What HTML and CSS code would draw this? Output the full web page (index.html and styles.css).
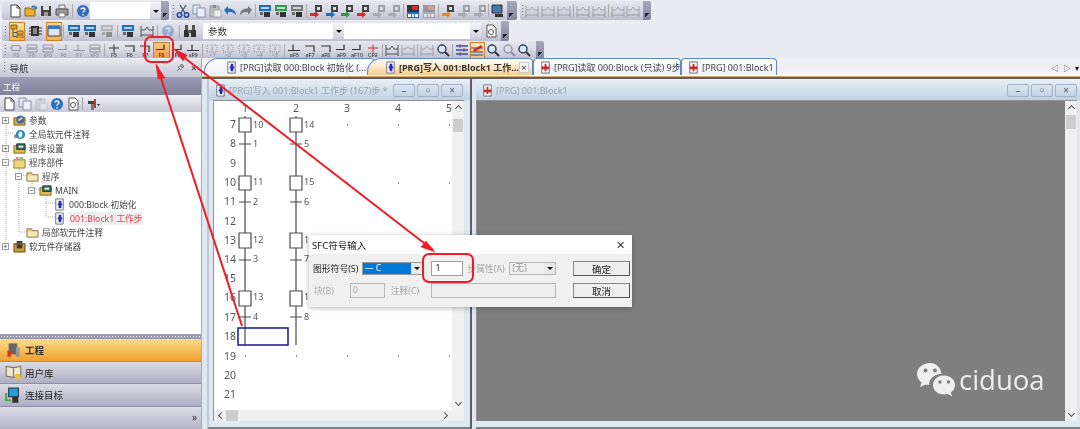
FILE: index.html
```html
<!DOCTYPE html>
<html lang="en">
<head>
  <meta charset="UTF-8" />
  <title>SFC</title>
  <link rel="stylesheet" href="styles.css">
</head>
<body>
<svg class="defs" width="0" height="0">
  <symbol id="new" viewBox="0 0 14 14"><path d="M3 1h6l3 3v9H3z" fill="#fff" stroke="#444"/><path d="M9 1v3h3" fill="none" stroke="#444"/></symbol>
  <symbol id="open" viewBox="0 0 14 14"><path d="M1 4h5l1 1h4v7H1z" fill="#e8b030" stroke="#8a6410"/><path d="M7 3c1-2 4-2 5 0l1-1v3h-3l1-1c-1-1-2-1-3 0z" fill="#2a6cc0"/></symbol>
  <symbol id="save" viewBox="0 0 14 14"><path d="M2 2h10v10H2z" fill="#444"/><path d="M4 2h6v4H4z" fill="#ddd"/><path d="M5 8h4v4H5z" fill="#999"/></symbol>
  <symbol id="print" viewBox="0 0 14 14"><path d="M4 1h6v4H4z" fill="#eee" stroke="#777"/><path d="M1 5h12v6H1z" fill="#999" stroke="#555"/><path d="M4 9h6v4H4z" fill="#fff" stroke="#777"/></symbol>
  <symbol id="help" viewBox="0 0 14 14"><circle cx="7" cy="7" r="6" fill="#2f6fc0"/><path d="M5 5.500c0-2 4-2 4 0 0 1.500-2 1.500-2 3" fill="none" stroke="#fff" stroke-width="1.300"/><path d="M6.300 10h1.400v1.400H6.300z" fill="#fff"/></symbol>
  <symbol id="cut" viewBox="0 0 14 14"><path d="M4 1l5 8M10 1L5 9" stroke="#555" stroke-width="1.300"/><circle cx="3.500" cy="11" r="2.200" fill="none" stroke="#1c4fa8" stroke-width="1.500"/><circle cx="10.500" cy="11" r="2.200" fill="none" stroke="#1c4fa8" stroke-width="1.500"/></symbol>
  <symbol id="copy" viewBox="0 0 14 14"><path d="M1 1h7v9H1z" fill="#dfe6f2" stroke="#8a93a8"/><path d="M5 4h8v9H5z" fill="#eef" stroke="#8a93a8"/></symbol>
  <symbol id="paste" viewBox="0 0 14 14"><path d="M2 2h9v11H2z" fill="#bbb" stroke="#999"/><path d="M5 1h3v3H5z" fill="#888"/><path d="M6 6h7v7H6z" fill="#eee" stroke="#aaa"/></symbol>
  <symbol id="undo" viewBox="0 0 14 14"><path d="M1 6l4-4v2.500c5 0 8 2 8 7-1.500-3-4-3.500-8-3.500V11z" fill="currentColor"/></symbol>
  <symbol id="redo" viewBox="0 0 14 14"><path d="M13 6L9 2v2.500c-5 0-8 2-8 7 1.500-3 4-3.500 8-3.500V11z" fill="currentColor"/></symbol>
  <symbol id="plc" viewBox="0 0 14 14"><path d="M1 1h12v6H1z" fill="currentColor"/><path d="M3 3h8v2H3z" fill="#fff" opacity=".7"/><path d="M6 8h6v5H6z" fill="#333"/><path d="M2 8h3v3H2z" fill="#666"/></symbol>
  <symbol id="xfer" viewBox="0 0 14 14"><path d="M6 1h7v7H6z" fill="#444"/><path d="M8 3h3v3H8z" fill="#ddd"/><path d="M1 9h5V7l4 3.500L6 14v-2H1z" fill="currentColor"/></symbol>
  <symbol id="dev" viewBox="0 0 14 14"><path d="M1 1h12v7H1z" fill="#333"/><path d="M6 2h6v4H6z" fill="#c33"/><path d="M1 8h12v6H1z" fill="currentColor"/><path d="M2 10h3v3H2zM6 10h2v3H6zM9 10h3v3H9z" fill="#fff"/></symbol>
  <symbol id="chip" viewBox="0 0 14 14"><path d="M3 2h8v10H3z" fill="#333"/><path d="M1 4h13M1 7h13M1 10h13" stroke="#333"/><path d="M5 4h4v6H5z" fill="#888"/></symbol>
  <symbol id="tree" viewBox="0 0 14 14"><path d="M1 1h6v4H1z" fill="#e09a20" stroke="#8a6410"/><path d="M7 7h6v3H7zM7 11h6v3H7z" fill="#e8b030" stroke="#8a6410"/><path d="M3 5v7.500h4M3 8.500h4" fill="none" stroke="#555"/></symbol>
  <symbol id="win" viewBox="0 0 14 14"><path d="M1 2h12v10H1z" fill="#dde7f5" stroke="#345"/><path d="M1 2h12v3H1z" fill="#3d73b8"/></symbol>
  <symbol id="mon" viewBox="0 0 14 14"><path d="M2 1h10v8H2z" fill="#4a78b0" stroke="#333"/><path d="M5 10h8v3H5z" fill="#333"/></symbol>
  <symbol id="find" viewBox="0 0 14 14"><path d="M1 6h5v7H1zM8 6h5v7H8z" fill="#333"/><path d="M2 1h3v5H2zM9 1h3v5H9zM5 6h3v3H5z" fill="#555"/></symbol>
  <symbol id="lens" viewBox="0 0 14 14"><circle cx="6" cy="6" r="4" fill="#d8e6f8" stroke="#345" stroke-width="1.500"/><path d="M9 9l4 4" stroke="#333" stroke-width="2"/></symbol>
  <symbol id="doc" viewBox="0 0 14 14"><path d="M3 1h6l3 3v9H3z" fill="#fff" stroke="#555"/><circle cx="7" cy="8" r="2.500" fill="none" stroke="#555"/></symbol>
  <symbol id="lines" viewBox="0 0 14 14"><path d="M1 3h12M1 7h12M1 11h12" stroke="#2a55b0" stroke-width="1.500"/><path d="M5 1v4M9 5v4M5 9v4" stroke="#c33"/></symbol>
  <symbol id="pen" viewBox="0 0 14 14"><path d="M1 5h12M1 9h12M1 12h12" stroke="#23489a"/><path d="M3 7l8-5 1.500 2-8 5z" fill="#d22"/></symbol>
  <symbol id="ladder" viewBox="0 0 14 14"><path d="M1 2v11M13 2v11M1 6h4l2-3 2 3h4M1 11h12" fill="none" stroke="#555"/></symbol>
  <symbol id="step" viewBox="0 0 14 8"><path d="M3 1h8v5H3z" fill="none" stroke="currentColor"/><path d="M1 3.500h2M11 3.500h2" stroke="currentColor"/></symbol>
  <symbol id="rows" viewBox="0 0 14 8"><path d="M2 .500h10v3H2zM2 4.500h10v3H2z" fill="none" stroke="currentColor"/></symbol>
  <symbol id="bar" viewBox="0 0 14 8"><path d="M7 0v8M2 3.500h10" stroke="currentColor" fill="none"/></symbol>
  <symbol id="hook" viewBox="0 0 14 8"><path d="M2 1.500h9v6" stroke="currentColor" fill="none" stroke-width="1.200"/></symbol>
  <symbol id="ell" viewBox="0 0 14 8"><path d="M10 0v5H2" stroke="currentColor" fill="none" stroke-width="1.200"/></symbol>
  <symbol id="lpost" viewBox="0 0 14 8"><path d="M6 0v6H1M6 6h7" stroke="currentColor" fill="none" stroke-width="1.200"/></symbol>
  <symbol id="dash" viewBox="0 0 14 8"><path d="M2 .500h10v7H2z" fill="none" stroke="currentColor" stroke-dasharray="1 1"/><path d="M7 2v4" stroke="currentColor"/></symbol>
  <symbol id="prog" viewBox="0 0 14 14"><path d="M3 1h8v12H3z" fill="#fff" stroke="#667"/><path d="M6 3h3v8H6z" fill="#2330b0"/><path d="M5 6h5v2H5z" fill="#2330b0"/></symbol>
  <symbol id="progr" viewBox="0 0 14 14"><path d="M3 1h8v12H3z" fill="#fff" stroke="#667"/><path d="M3 6h8v3H3z" fill="#c52a2a"/><path d="M7 3v8" stroke="#c52a2a" stroke-width="2"/></symbol>
  <symbol id="folder" viewBox="0 0 14 14"><path d="M1 3h5l1 2h6v7H1z" fill="#eacb7c" stroke="#8a7a50"/><path d="M2 6h10v5H2z" fill="#f4e6bf"/></symbol>
  <symbol id="fold2" viewBox="0 0 14 14"><path d="M1 4h12v8H1z" fill="#e3b94f" stroke="#7a6a30"/><path d="M4 2h9v6H4z" fill="#3b6e50" stroke="#234"/><path d="M6 4h5v2H6z" fill="#dfe"/></symbol>
  <symbol id="param" viewBox="0 0 14 14"><path d="M1 4h12v8H1z" fill="#d9a52e" stroke="#7a6a30"/><circle cx="8" cy="6" r="4.500" fill="#3a6bb0"/><path d="M6 7l4-3" stroke="#f5d060" stroke-width="2"/></symbol>
  <symbol id="globe" viewBox="0 0 14 14"><path d="M1 7h5v4H1z" fill="#999"/><circle cx="8" cy="7" r="5" fill="#2f86c0"/><path d="M8 3v8" stroke="#9fd090" stroke-width="3"/><path d="M6 5h4v4H6z" fill="#fff"/></symbol>
  <symbol id="parts" viewBox="0 0 14 14"><path d="M1 4h12v9H1z" fill="#f0d675" stroke="#8a7a40"/><path d="M3 1h3v4H3z" fill="#e78aa0"/><path d="M7 1h4v4H7z" fill="#8cc46a"/></symbol>
  <symbol id="mem" viewBox="0 0 14 14"><path d="M1 4h12v9H1z" fill="#c99a32" stroke="#5a4a20"/><path d="M4 1h6v8H4z" fill="#3a3a3a"/><path d="M5 3h2v2H5z" fill="#d33"/><path d="M8 3h1v2H8z" fill="#3c3"/></symbol>
  <symbol id="tools" viewBox="0 0 14 14"><path d="M2 4h7v3H2z" fill="#444"/><path d="M5 7h3v6H5z" fill="#777"/><path d="M8 2h2v9H8z" fill="#c33"/><path d="M11 7h3l-1.500 2z" fill="#222"/></symbol>
  <symbol id="book" viewBox="0 0 14 14"><path d="M1 2l6 1 6-1v8l-6 1-6-1z" fill="#efe6d2" stroke="#8a7a60"/><path d="M7 3v8" stroke="#8a7a60"/><circle cx="10.500" cy="10.500" r="2.500" fill="#e3c23a"/></symbol>
  <symbol id="link" viewBox="0 0 14 14"><path d="M1 5v6h4" fill="none" stroke="#3aa84a" stroke-width="1.500"/><path d="M3 1h8v7H3z" fill="#1fa0e0" stroke="#345"/><path d="M6 8h5v5H6z" fill="#333"/></symbol>
  <symbol id="plant" viewBox="0 0 14 14"><path d="M3 2h7v9H3z" fill="#666"/><path d="M9 5h3v8H9z" fill="#999"/><path d="M2 8h3v5H2z" fill="#d8381e"/></symbol>
</svg>

<div class="app">
  <div class="toolbars">
    <div class="tb-row r1">
      <div class="tb">
        <i class="b"><svg><use href="#new"/></svg></i><i class="b"><svg><use href="#open"/></svg></i><i class="b"><svg><use href="#save"/></svg></i><i class="b"><svg><use href="#print"/></svg></i>
        <s class="sep wide"></s>
        <i class="b"><svg><use href="#help"/></svg></i>
        <div class="combo c-top"><span></span><u class="drop"></u></div>
        <em class="chev"></em>
      </div>
      <div class="tb g2">
        <span class="grip"></span>
        <i class="b"><svg><use href="#cut"/></svg></i><i class="b"><svg><use href="#copy"/></svg></i><i class="b"><svg><use href="#paste"/></svg></i><i class="b blue"><svg><use href="#undo"/></svg></i><i class="b grey"><svg><use href="#redo"/></svg></i>
        <s class="sep"></s>
        <i class="b blue"><svg><use href="#plc"/></svg></i><i class="b green"><svg><use href="#plc"/></svg></i><i class="b grey"><svg><use href="#plc"/></svg></i>
        <s class="sep"></s>
        <i class="b red"><svg><use href="#xfer"/></svg></i><i class="b blue"><svg><use href="#xfer"/></svg></i><i class="b green"><svg><use href="#xfer"/></svg></i><i class="b red"><svg><use href="#xfer"/></svg></i><i class="b off grey"><svg><use href="#xfer"/></svg></i><i class="b off grey"><svg><use href="#xfer"/></svg></i>
        <s class="sep"></s>
        <i class="b blue"><svg><use href="#dev"/></svg></i><i class="b off grey"><svg><use href="#dev"/></svg></i>
        <s class="sep"></s>
        <i class="b orange"><svg><use href="#xfer"/></svg></i><i class="b off grey"><svg><use href="#xfer"/></svg></i><i class="b off grey"><svg><use href="#xfer"/></svg></i>
        <s class="sep thin"></s>
        <i class="b"><svg><use href="#mon"/></svg></i>
        <em class="chev long"></em>
      </div>
      <div class="tb g3">
        <span class="grip"></span>
        <i class="b off"><svg><use href="#ladder"/></svg></i><i class="b off"><svg><use href="#ladder"/></svg></i><i class="b off"><svg><use href="#ladder"/></svg></i>
        <s class="sep"></s>
        <i class="b off"><svg><use href="#ladder"/></svg></i><i class="b off"><svg><use href="#ladder"/></svg></i>
        <s class="sep"></s>
        <i class="b off"><svg><use href="#ladder"/></svg></i><i class="b off"><svg><use href="#ladder"/></svg></i>
        <em class="chev"></em>
      </div>
    </div>

    <div class="tb-row r2">
      <div class="tb">
        <span class="grip"></span>
        <i class="b on"><svg><use href="#tree"/></svg></i><i class="b gap"><svg><use href="#chip"/></svg></i><i class="b on gap"><svg><use href="#win"/></svg></i>
        <s class="sep"></s>
        <i class="b blue"><svg><use href="#plc"/></svg></i><i class="b blue"><svg><use href="#plc"/></svg></i><i class="b off grey"><svg><use href="#plc"/></svg></i>
        <s class="sep wide"></s>
        <i class="b blue"><svg><use href="#plc"/></svg></i><i class="b gap"><svg><use href="#ladder"/></svg></i>
        <s class="sep wide"></s>
        <i class="b off"><svg><use href="#help"/></svg></i>
        <s class="sep wide"></s>
        <i class="b"><svg><use href="#find"/></svg></i>
        <div class="combo c-find"><span>参数</span><u class="drop"></u></div>
        <div class="combo c-next"><span></span><u class="drop"></u></div>
        <i class="b gap"><svg><use href="#doc"/></svg></i>
        <em class="chev"></em>
      </div>
    </div>

    <div class="tb-row r3">
      <div class="tb">
        <span class="grip"></span>
        <i class="k off"><svg><use href="#step"/></svg><b>F5</b></i><i class="k off"><svg><use href="#rows"/></svg><b>F6</b></i><i class="k off"><svg><use href="#rows"/></svg><b>sF6</b></i><i class="k off"><svg><use href="#ell"/></svg><b>F6</b></i><i class="k off"><svg><use href="#lpost"/></svg><b>F7</b></i><i class="k off"><svg><use href="#rows"/></svg><b>sF5</b></i>
        <s class="sep"></s>
        <i class="k"><svg><use href="#bar"/></svg><b>F5</b></i><i class="k"><svg><use href="#hook"/></svg><b>F6</b></i><i class="k"><svg><use href="#hook"/></svg><b>F7</b></i><i class="k on"><svg><use href="#ell"/></svg><b>F8</b></i><i class="k"><svg><use href="#ell"/></svg><b>F9</b></i><i class="k"><svg><use href="#lpost"/></svg><b>sF9</b></i>
        <s class="sep"></s>
        <i class="k off"><svg><use href="#dash"/></svg><b>&lt;1</b></i><i class="k off"><svg><use href="#dash"/></svg><b>&lt;2</b></i><i class="k off"><svg><use href="#dash"/></svg><b>&lt;3</b></i><i class="k off"><svg><use href="#dash"/></svg><b>&lt;4</b></i><i class="k off"><svg><use href="#dash"/></svg><b>&lt;5</b></i>
        <s class="sep"></s>
        <i class="k"><svg><use href="#lpost"/></svg><b>aF5</b></i><i class="k"><svg><use href="#hook"/></svg><b>aF7</b></i><i class="k"><svg><use href="#hook"/></svg><b>aF8</b></i><i class="k"><svg><use href="#ell"/></svg><b>aF9</b></i><i class="k"><svg><use href="#ell"/></svg><b>aF10</b></i><i class="k red-x"><svg><use href="#bar"/></svg><b>CF9</b></i>
        <s class="sep"></s>
        <i class="b"><svg><use href="#ladder"/></svg></i><i class="b off"><svg><use href="#ladder"/></svg></i>
        <s class="sep"></s>
        <i class="b off"><svg><use href="#ladder"/></svg></i><i class="b"><svg><use href="#lens"/></svg></i>
        <s class="sep"></s>
        <i class="b"><svg><use href="#lines"/></svg></i><i class="b on dim"><svg><use href="#pen"/></svg></i><i class="b"><svg><use href="#lens"/></svg></i><i class="b off"><svg><use href="#lens"/></svg></i><i class="b"><svg><use href="#lens"/></svg></i>
        <em class="chev"></em>
      </div>
    </div>
  </div>

  <div class="main">
    <aside class="nav">
      <div class="nav-head">
        <span class="grip"></span><span class="nav-title">导航</span>
        <span class="pin">&#128204;&#xFE0E;</span><span class="close">×</span>
      </div>
      <div class="nav-sub">工程</div>
      <div class="nav-tools">
        <i class="b"><svg><use href="#new"/></svg></i><i class="b"><svg><use href="#copy"/></svg></i><i class="b off"><svg><use href="#paste"/></svg></i><i class="b"><svg><use href="#help"/></svg></i><i class="b"><svg><use href="#doc"/></svg></i>
        <s class="sep"></s>
        <i class="b"><svg><use href="#tools"/></svg></i>
      </div>
      <div class="tree">
        <svg class="tree-lines" width="200" height="150" viewBox="0 113 200 150">
          <path d="M6 124V247M6 134H14M6 162H14M19 168V233H28M19 176H28M32 182V190H41M46 196V218H55M46 204H55" fill="none" stroke="#aaa" stroke-dasharray="1 1"/>
        </svg>
        <div class="node l0"><u class="pm">+</u><svg><use href="#param"/></svg>参数</div>
        <div class="node l0"><u class="pm none"></u><svg><use href="#globe"/></svg>全局软元件注释</div>
        <div class="node l0"><u class="pm">+</u><svg><use href="#fold2"/></svg>程序设置</div>
        <div class="node l0"><u class="pm">−</u><svg><use href="#parts"/></svg>程序部件</div>
        <div class="node l1"><u class="pm">−</u><svg><use href="#folder"/></svg>程序</div>
        <div class="node l2"><u class="pm">−</u><svg><use href="#fold2"/></svg>MAIN</div>
        <div class="node l3"><svg><use href="#prog"/></svg>000:Block 初始化</div>
        <div class="node l3"><svg><use href="#prog"/></svg><span class="current">001:Block1 工作步</span></div>
        <div class="node l1 nopm"><svg><use href="#folder"/></svg>局部软元件注释</div>
        <div class="node l0"><u class="pm">+</u><svg><use href="#mem"/></svg>软元件存储器</div>
      </div>
      <div class="splitter"></div>
      <div class="nav-btn active"><svg><use href="#plant"/></svg>工程</div>
      <div class="nav-btn"><svg><use href="#book"/></svg>用户库</div>
      <div class="nav-btn"><svg><use href="#link"/></svg>连接目标</div>
      <div class="nav-foot">»</div>
    </aside>

    <section class="work">
      <div class="tabs">
        <div class="tab t1"><svg><use href="#prog"/></svg>[PRG]读取 000:Block 初始化 (...</div>
        <div class="tab t2 active"><svg><use href="#prog"/></svg>[PRG]写入 001:Block1 工作...<span class="tab-x">×</span></div>
        <div class="tab t3"><svg><use href="#progr"/></svg>[PRG]读取 000:Block (只读) 9步</div>
        <div class="tab t4"><svg><use href="#progr"/></svg>[PRG] 001:Block1</div>
        <div class="tab-nav"><span>◁</span><span>▷</span><span class="tab-menu">▾</span></div>
      </div>
      <div class="mdi">
        <div class="win w-left">
          <div class="win-title"><svg><use href="#prog"/></svg><span>[PRG]写入 001:Block1 工作步 (167)步 *</span>
            <div class="win-btns"><u>–</u><u>▫</u><u>×</u></div>
          </div>
          <div class="client">
            <div class="client-top">
              <svg class="sfc" width="238" height="309" viewBox="214 101 238 309">
                <g class="wires">
                  <path d="M245 116V345M296 116V345"/>
                  <path d="M239 144h12M239 202h12M239 260h12M239 317h12M290 144h12M290 202h12M290 260h12M290 317h12"/>
                  <path class="box" d="M239 118h12v14h-12zM239 176h12v14h-12zM239 233h12v15h-12zM239 291h12v15h-12zM290 118h12v14h-12zM290 176h12v14h-12zM290 233h12v15h-12zM290 291h12v15h-12z"/>
                </g>
                <rect class="cursor" x="238" y="328" width="50" height="17"/>
                <g class="heads">
                  <text x="245" y="112">1</text><text x="296" y="112">2</text><text x="347" y="112">3</text><text x="398" y="112">4</text><text x="449" y="112">5</text>
                </g>
                <g class="nums">
                  <text x="236" y="128">7</text><text x="236" y="147">8</text><text x="236" y="167">9</text><text x="236" y="186">10</text><text x="236" y="205">11</text><text x="236" y="225">12</text><text x="236" y="244">13</text><text x="236" y="263">14</text><text x="236" y="282">15</text><text x="236" y="301">16</text><text x="236" y="321">17</text><text x="236" y="340">18</text><text x="236" y="360">19</text><text x="236" y="379">20</text><text x="236" y="398">21</text>
                </g>
                <g class="tags">
                  <text x="253" y="128">10</text><text x="253" y="147">1</text><text x="253" y="185">11</text><text x="253" y="205">2</text><text x="253" y="243">12</text><text x="253" y="262">3</text><text x="253" y="300">13</text><text x="253" y="320">4</text>
                  <text x="304" y="128">14</text><text x="304" y="147">5</text><text x="304" y="185">15</text><text x="304" y="205">6</text><text x="304" y="243">16</text><text x="304" y="262">7</text><text x="304" y="300">17</text><text x="304" y="320">8</text>
                </g>
                <path class="dots" d="M347 125h1M398 125h1M449 125h1M347 183h1M398 183h1M449 183h1M245 356h1M296 356h1M347 356h1M398 356h1M449 356h1"/>
              </svg>
              <div class="vscroll"><u class="up"></u><u class="thumb"></u><u class="down"></u></div>
            </div>
            <div class="hscroll"><u class="left"></u><u class="hthumb"></u><u class="right"></u></div>
          </div>
        </div>
        <div class="divider"></div>
        <div class="win w-right">
          <div class="win-title"><svg><use href="#progr"/></svg><span>[PRG] 001:Block1</span>
            <div class="win-btns"><u>–</u><u>▫</u><u>×</u></div>
          </div>
          <div class="client">
            <div class="client-top">
              <div class="grey-area"></div>
              <div class="vscroll"><u class="up"></u><u class="thumb right-thumb"></u><u class="down"></u></div>
            </div>
          </div>
        </div>
      </div>
    </section>
  </div>

  <div class="dialog">
    <div class="dlg-title"><span>SFC符号输入</span><span class="dlg-x">✕</span></div>
    <div class="dlg-body">
      <div class="dlg-col">
        <div class="dlg-row">
          <label class="l-sym">图形符号(S)</label>
          <div class="sel"><span>— C</span><u class="drop"></u></div>
          <input class="in-step" value="1">
          <label class="dis l-attr">步属性(A)</label>
          <div class="sel dis-sel"><span>[无]</span><u class="drop"></u></div>
        </div>
        <div class="dlg-row">
          <label class="dis l-blk">块(B)</label>
          <div class="field f-blk">0</div>
          <label class="dis l-note">注释(C)</label>
          <div class="field f-note"></div>
        </div>
      </div>
      <div class="dlg-btns"><button>确定</button><button>取消</button></div>
    </div>
  </div>

  <svg class="notes" width="1080" height="429">
    <rect x="145" y="37" width="28" height="25" rx="6"/>
    <rect x="423" y="254" width="50" height="28" rx="6"/>
    <path d="M157 66L242 326"/>
    <path d="M177 52L433 250"/>
    <path class="head" d="M156 64l9 14-7 1zM174 49l13 6-4 6zM435 252l-14-5 5-6z"/>
  </svg>

  <div class="mark">
    <svg width="40" height="36" viewBox="0 0 40 36">
      <path fill="#efefef" d="M14 1C6.500 1 1 6 1 12c0 3.500 2 6.500 4.500 8.500L4 25l5.500-2.500c1.200.4 2.300.6 3.500.6 0-6.500 5.500-11 12.500-11C25 5.500 20 1 14 1z"/>
      <path fill="#efefef" d="M39 23c0-5.500-5-9.500-11-9.500S17 17.500 17 23s5 9.500 11 9.500c1.300 0 2.500-.2 3.600-.5l4.400 2.500-1.200-4C37.500 28.500 39 26 39 23z"/>
      <g fill="#7f7f7f"><circle cx="9.500" cy="8.500" r="2"/><circle cx="19" cy="8.500" r="2"/><circle cx="24" cy="20" r="1.700"/><circle cx="32.500" cy="20" r="1.700"/></g>
    </svg>
    <span>ciduoa</span>
  </div>
</div>
</body>
</html>
```

FILE: styles.css
```css
* {
  box-sizing: border-box;
}

body {
  margin: 0;
  font-family: "Noto Sans", "Noto Sans CJK SC", sans-serif;
  font-size: 9px;
  color: #333;
}

i, u, em, s {
  font-style: normal;
  text-decoration: none;
}

.defs {
  position: absolute;
}

.app {
  position: relative;
  width: 1080px;
  height: 429px;
  overflow: hidden;
  background: #ecedf3;
  filter: blur(0.45px);
}

/* toolbars */
.toolbars {
  height: 60px;
  padding-top: 1px;
  background: #ebebf2;
}

.tb-row {
  display: flex;
  gap: 3px;
  padding-left: 2px;
}

.r1 { height: 19px; margin-bottom: 1px; }
.r2 { height: 20px; }
.r3 { height: 18px; }

.tb {
  display: flex;
  align-items: center;
  height: 100%;
  padding-left: 5px;
  border-radius: 2px;
  background: linear-gradient(#e6e6ee, #d8d8e4 50%, #bebdd0);
}

.g2 { padding-left: 0; margin-left: 0; }
.g3 { padding-left: 0; }

.grip {
  width: 3.500px;
  height: 13px;
  margin-left: 1px;
  background: radial-gradient(circle, #777 0.7px, transparent 1px) 0 0 / 3px 3px;
}

.r2 .tb, .r3 .tb { padding-left: 1px; }
.r2 .grip, .r3 .grip { margin: 0 1px 0 1px; }

.b, .k {
  display: flex;
  flex: none;
  flex-direction: column;
  align-items: center;
  justify-content: center;
  width: 15.700px;
  height: 17px;
  color: #333;
}

.b svg {
  width: 14px;
  height: 14px;
}

.gap { margin-left: 2px; }
.r2 .b { width: 16.500px; }

.blue { color: #1f6fc0; }
.green { color: #2f9a4a; }
.grey { color: #777; }
.red { color: #d0302a; }
.orange { color: #e58a1c; }
.off { opacity: 0.4; }

.on {
  border: 1px solid #c8802a;
  background: linear-gradient(#fde3a8, #f8b048);
}

.r2 .on { height: 19px; }
.on.dim { background: linear-gradient(#fde9c0, #f2c070); }

.k svg {
  width: 14px;
  height: 9px;
  margin-top: 1px;
}

.k b {
  margin-top: -1px;
  font-size: 5.500px;
  line-height: 6px;
  font-weight: 400;
  color: #222;
}

.k.on {
  width: 16.500px;
  background: linear-gradient(#fbc98a, #f49a42);
  color: #4a2a10;
}

.red-x svg { color: #d0302a; }

.sep {
  width: 3.500px;
  height: 13px;
  flex: none;
  background: linear-gradient(#aaa, #aaa) center / 1px 100% no-repeat;
}

.sep.wide { width: 5px; }
.sep.thin { width: 2px; }

.chev {
  position: relative;
  flex: none;
  align-self: stretch;
  width: 8px;
  margin-left: auto;
  border-radius: 0 2px 2px 0;
  background: linear-gradient(#a8a8bc, #85859e);
}

.chev.long { width: 10px; }

.chev::after {
  content: "";
  position: absolute;
  left: 2px;
  bottom: 3px;
  width: 4px;
  height: 3px;
  border-top: 1px solid #222;
  background: linear-gradient(135deg, #222 50%, transparent 50%);
}

.combo {
  display: flex;
  flex: none;
  align-items: center;
  height: 16px;
  padding-left: 5px;
  background: #fff;
  font-size: 9.500px;
}

.combo span { flex: 1; }

.c-top { width: 71px; height: 17px; }
.c-find { width: 141px; margin-left: 5px; }
.c-next { width: 137px; }

.drop {
  flex: none;
  position: relative;
  width: 11px;
  height: 100%;
  background: linear-gradient(#f4f4f8, #cfcfda);
}

.drop::after {
  content: "";
  position: absolute;
  left: 3px;
  top: 45%;
  border: 3px solid transparent;
  border-top-color: #111;
  border-bottom-width: 0;
}

.r1 .g2 { width: 346px; }
.r1 .g3 { width: 131px; }
.r1 .tb:first-child { width: 166px; }
.r2 .tb { width: 507px; }
.r3 .tb { width: 542px; }

/* main area */
.main {
  display: flex;
  height: 369px;
}

.nav {
  display: flex;
  flex: none;
  flex-direction: column;
  width: 202px;
  margin-top: -2px;
  background: #fff;
  border-right: 1px solid #a9a9bb;
}

.nav-head {
  display: flex;
  align-items: center;
  height: 19px;
  padding-left: 2px;
  background: linear-gradient(#eaeaf1, #c6c6d6);
  font-size: 9.500px;
}

.nav-title { margin-left: 3px; }
.pin { margin-left: auto; font-size: 7px; margin-right: 6px; }
.close { margin-right: 4px; font-size: 11px; }

.nav-sub {
  height: 18px;
  padding: 3px 3px;
  background: linear-gradient(#9c9cb4, #80809c);
  color: #fff;
  font-size: 8.500px;
}

.nav-tools {
  display: flex;
  align-items: center;
  height: 17px;
  padding-left: 1px;
  background: linear-gradient(#f0f0f5, #c9c9d8);
}

.nav-tools .b { width: 16px; }

.tree {
  position: relative;
  height: 222px;
  padding-top: 1px;
  background: #fff;
}

.tree-lines {
  position: absolute;
  left: 0;
  top: 0;
}

.node {
  position: relative;
  display: flex;
  align-items: center;
  height: 14.100px;
  white-space: nowrap;
  font-size: 8.700px;
  color: #444;
}

.node svg {
  flex: none;
  width: 13px;
  height: 13px;
  margin-right: 3px;
}

.l0 { padding-left: 2px; }
.l1 { padding-left: 15px; }
.l2 { padding-left: 28px; }
.l3 { padding-left: 53px; }
.l1.nopm { padding-left: 26px; }

.pm {
  width: 7px;
  height: 7px;
  margin-right: 4px;
  border: 1px solid #999;
  background: #fff;
  font-size: 7px;
  line-height: 5px;
  text-align: center;
  color: #333;
}

.pm.none { border: 0; background: none; }

.current {
  padding: 0 1px;
  background: #eee;
  color: #e8404a;
}

.splitter {
  height: 5px;
  background: radial-gradient(circle, #eee 0.5px, transparent 0.8px) center / 3px 3px repeat-x #9b9bb2;
}

.nav-btn {
  display: flex;
  align-items: center;
  height: 22.700px;
  padding-left: 5px;
  border-bottom: 1px solid #8e8ea6;
  background: linear-gradient(#dcdce6, #aeaec4);
  font-size: 9.500px;
  color: #222;
}

.nav-btn svg {
  width: 17px;
  height: 17px;
  margin-right: 3px;
}

.nav-btn.active { background: linear-gradient(#fbdc8c, #f0a22e); }

.nav-foot {
  flex: 1;
  padding: 6px 4px 0 0;
  background: linear-gradient(#dcdce6, #b4b4c8);
  text-align: right;
  font-size: 10px;
  line-height: 9px;
}

.work {
  flex: 1;
  display: flex;
  flex-direction: column;
  min-width: 0;
  margin-top: -2px;
}

.tabs {
  position: relative;
  display: flex;
  align-items: flex-end;
  flex: none;
  height: 21px;
  padding: 0 0 2px 2px;
  border-bottom: 2px solid #5e5e68;
  background: linear-gradient(#eeeef3 60%, #fff);
  box-shadow: inset 0 -1px 0 #d8a868;
}

.tab {
  display: flex;
  align-items: center;
  flex: none;
  height: 17px;
  overflow: hidden;
  border: 1px solid #5b8bc8;
  border-bottom: 0;
  border-radius: 4px 4px 0 0;
  background: linear-gradient(#fff, #eef1f6);
  font-size: 9px;
  white-space: nowrap;
  color: #444;
}

.tab svg {
  flex: none;
  width: 13px;
  height: 13px;
  margin-right: 2px;
}

.t1 { width: 171px; padding-left: 20px; border-top-left-radius: 14px; }
.t2 { width: 166px; padding-left: 16px; margin-left: -8px; position: relative; border-top-left-radius: 14px; }
.t3 { width: 148px; padding-left: 5px; }
.t4 { width: 96px; padding-left: 5px; }

.active {
  background: linear-gradient(#fff, #fdf0d8 35%, #f9cb8a);
  font-weight: 700;
  color: #333;
}

.tab-x {
  flex: none;
  width: 10px;
  height: 11px;
  margin-left: auto;
  margin-right: 4px;
  background: #f4f4f4;
  border: 1px solid #ccc;
  font-size: 9px;
  line-height: 9px;
  text-align: center;
  font-weight: 400;
}

.tab-nav {
  display: flex;
  gap: 4px;
  margin-left: auto;
  padding: 0 1px 2px 0;
  font-size: 8px;
  color: #555;
}

.tab-menu {
  color: #111;
}

.mdi {
  display: flex;
  flex: 1;
  min-height: 0;
  padding-left: 5px;
  background: #dfe7f0;
}

.win {
  display: flex;
  flex-direction: column;
  background: linear-gradient(#e9f0f6, #bfd2e3 21px, #dde8f1 22px);
}

.w-left {
  flex: none;
  width: 263px;
  padding: 0 6px 6px 4px;
  border-left: 2px solid #c2c8d2;
  border-bottom: 2px solid #7f7f85;
}

.w-right {
  flex: 1;
  margin-left: 4px;
  padding: 0 3px 6px 0;
  border-bottom: 2px solid #7f7f85;
}

.divider {
  flex: none;
  width: 2px;
  background: #5e5e68;
}

.win-title {
  display: flex;
  align-items: center;
  flex: none;
  height: 21px;
  padding: 2px 0 0 5px;
  font-size: 9px;
  color: #9ba3ab;
}

.w-left .win-title { padding-left: 1px; }

.win-title svg {
  flex: none;
  width: 13px;
  height: 13px;
  margin-right: 2px;
}

.win-btns {
  display: flex;
  gap: 2px;
  margin-left: auto;
}

.w-left .win-btns { margin-right: 1px; }

.win-btns u {
  width: 22px;
  height: 13px;
  border: 1px solid #9fb2c6;
  border-radius: 2px;
  background: linear-gradient(#dce6f0, #c2d2e2);
  text-align: center;
  font-size: 10px;
  line-height: 10px;
  color: #556;
}

.client {
  display: flex;
  flex: 1;
  flex-direction: column;
  min-height: 0;
  border: 1px solid #8f9299;
  border-width: 1px 0 0 1px;
  background: #fff;
}

.client-top {
  display: flex;
  flex: 1;
  min-height: 0;
}

.sfc {
  flex: none;
  background: #fff;
}

.grey-area {
  flex: 1;
  background: #7f7f7f;
}

.wires path {
  fill: none;
  stroke: #4c4c4c;
  stroke-width: 1.200;
}

.wires .box { fill: #fff; }

.cursor {
  fill: none;
  stroke: #23239c;
  stroke-width: 1.600;
}

.sfc text {
  font-size: 10.500px;
  fill: #555;
}

.heads text { text-anchor: middle; }
.nums text { text-anchor: end; }
.tags text { font-size: 9px; }

.dots {
  fill: none;
  stroke: #222;
  stroke-width: 1;
}

.vscroll {
  position: relative;
  flex: none;
  width: 12px;
  background: #f0f0f0;
}

.hscroll {
  position: relative;
  flex: none;
  height: 11px;
  background: #f0f0f0;
}

.up, .down, .left, .right {
  position: absolute;
  width: 5px;
  height: 5px;
  border: solid #555;
  border-width: 1px 0 0 1px;
}

.up { top: 5px; left: 3.500px; transform: rotate(45deg); }
.down { bottom: 5px; left: 3.500px; transform: rotate(225deg); }
.left { left: 5px; top: 3px; transform: rotate(-45deg); }
.right { right: 17px; top: 3px; transform: rotate(135deg); }

.thumb {
  position: absolute;
  top: 18px;
  left: 1px;
  right: 1px;
  height: 13px;
  background: #cdcdcd;
}

.right-thumb { top: 14px; height: 14px; }

.hthumb {
  position: absolute;
  left: 12px;
  top: 0;
  width: 12px;
  height: 11px;
  background: #cdcdcd;
}

/* dialog */
.dialog {
  position: absolute;
  left: 309px;
  top: 235px;
  width: 323px;
  height: 72px;
  background: #f0f0f0;
  box-shadow: 0 1px 5px rgba(0, 0, 0, 0.3);
}

.dlg-title {
  display: flex;
  justify-content: space-between;
  align-items: center;
  height: 19px;
  padding: 0 7px 0 3px;
  background: #fff;
  font-size: 9.500px;
  color: #222;
}

.dlg-x {
  font-size: 11px;
  color: #333;
}

.dlg-body {
  display: flex;
  padding: 7px 3px 0 4px;
}

.dlg-col {
  display: flex;
  flex-direction: column;
  gap: 8px;
  width: 243px;
}

.dlg-row {
  display: flex;
  align-items: center;
  height: 14px;
  font-size: 8.800px;
  color: #222;
}

.dis { color: #a8a8a8; }

.l-sym { width: 49px; white-space: nowrap; }

.sel {
  display: flex;
  width: 62px;
  height: 13px;
  border: 1px solid #9a9a9a;
}

.sel span {
  flex: 1;
  padding-left: 2px;
  background: #0078d7;
  color: #fff;
  line-height: 11px;
}

.sel .drop { background: #e8e8e8; }

.in-step {
  width: 32px;
  height: 15px;
  margin-left: 8px;
  padding: 0 0 0 3px;
  border: 1px solid #a0a0a0;
  background: #fff;
  font: inherit;
  color: #222;
}

.l-attr { width: 42px; margin-left: 4px; white-space: nowrap; }

.dis-sel {
  width: 47px;
  margin-left: 0;
  border-color: #b8b8b8;
}

.dis-sel span { background: none; color: #999; }

.l-blk { width: 37px; padding-left: 1px; }
.l-note { width: 40px; margin-left: 6px; }

.field {
  height: 15px;
  padding-left: 2px;
  border: 1px solid #b8b8b8;
  background: #eee;
  color: #aaa;
  line-height: 13px;
}

.f-blk { width: 35px; }
.f-note { width: 126px; }

.dlg-btns {
  display: flex;
  flex-direction: column;
  gap: 7px;
  margin-left: 17px;
}

.dlg-btns button {
  width: 57px;
  height: 15px;
  padding: 0;
  border: 1px solid #888;
  border-right-color: #555;
  border-bottom-color: #555;
  background: #eee;
  font: inherit;
  font-size: 9.500px;
  color: #222;
}

/* red notes over the screenshot */
.notes {
  position: absolute;
  left: 0;
  top: 0;
}

.notes rect, .notes path {
  fill: none;
  stroke: #ee1c25;
  stroke-width: 2;
}

.notes .head {
  fill: #ee1c25;
  stroke-width: 0.500;
}

.mark {
  position: absolute;
  left: 916px;
  top: 362px;
  display: flex;
  align-items: center;
  gap: 3px;
  color: #efefef;
  font-family: "Open Sans", sans-serif;
  font-size: 27.500px;
  line-height: 36px;
}
```
